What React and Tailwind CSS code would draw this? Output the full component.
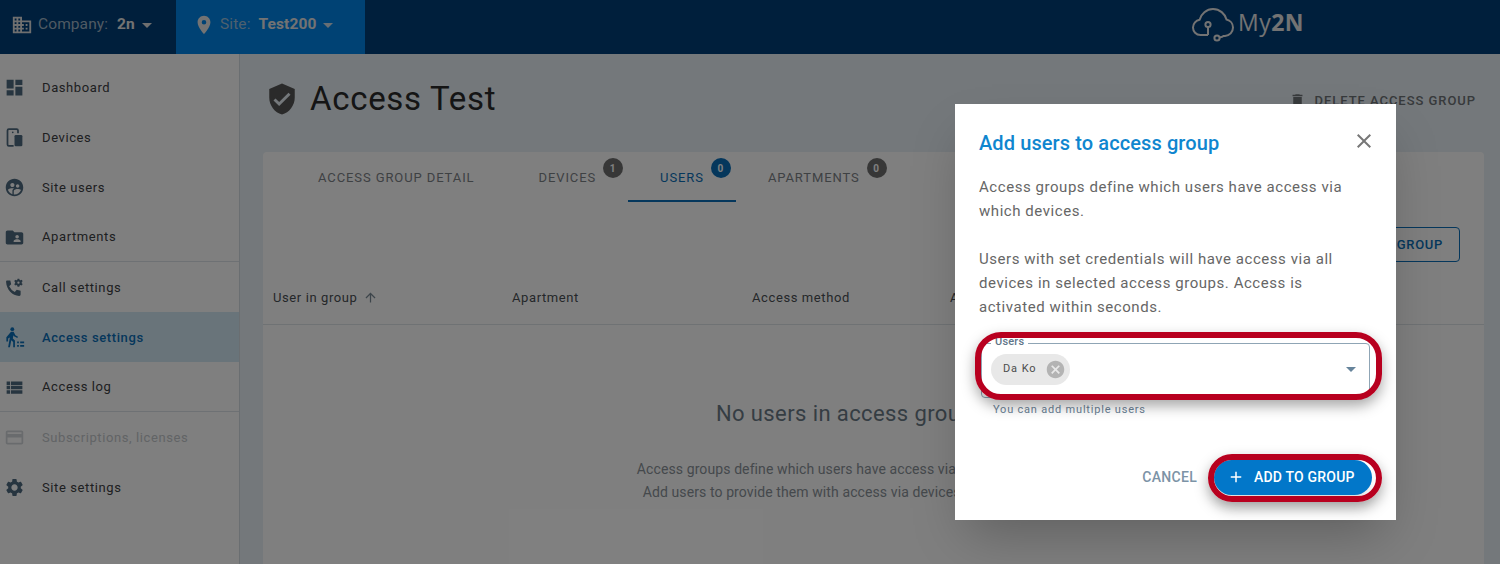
import React from 'react'
import {
  MdDashboard,
  MdFolderShared,
  MdViewList,
  MdCreditCard,
  MdSettings,
  MdVerifiedUser,
  MdDelete,
  MdBusiness,
  MdPlace,
  MdArrowDropDown,
  MdClose,
  MdCancel,
  MdAdd,
  MdArrowUpward,
  MdSupervisedUserCircle,
} from 'react-icons/md'

function DevicesIcon({ className }) {
  return (
    <svg viewBox="0 0 24 24" className={className} fill="none" stroke="currentColor" strokeWidth="2">
      <path d="M16 7V4a1.5 1.5 0 0 0-1.5-1.5h-9A1.5 1.5 0 0 0 4 4v16a1.5 1.5 0 0 0 1.5 1.5H11" />
      <rect x="12" y="9" width="9" height="13" rx="1.5" fill="currentColor" stroke="none" />
      <circle cx="10" cy="6" r="1" fill="currentColor" stroke="none" />
    </svg>
  )
}

function CallSettingsIcon({ className }) {
  return (
    <svg viewBox="0 0 24 24" className={className} fill="currentColor">
      <path d="M3 4h4.2l1 4.4-2.3 2.2a13 13 0 0 0 6.4 6.4l2.2-2.3 4.5 1V20a1.6 1.6 0 0 1-1.7 1.6C9.5 21.2 2.8 14.500 2.400 5.700A1.600 1.600 0 0 1 3 4z" />
      <path d="M17.500 2l.4 1.300 1.200.5 1.200-.6 1 1.700-1 .9v1.400l1 .9-1 1.700-1.200-.6-1.200.5-.4 1.300h-2l-.4-1.300-1.200-.5-1.200.6-1-1.700 1-.9V5.800l-1-.9 1-1.700 1.200.6 1.200-.5.4-1.300zm-1 3.200a1.300 1.300 0 1 0 0 2.600 1.300 1.300 0 0 0 0-2.600z" />
    </svg>
  )
}

function AccessIcon({ className }) {
  return (
    <svg viewBox="0 0 24 24" className={className} fill="currentColor">
      <circle cx="9.500" cy="2.500" r="2.200" />
      <path d="M8 5.500h3l2 4 3 1.500-.8 1.500-3.700-1.800-.7-1.200-.7 3.500 2.400 2.500V23h-2v-6l-2.200-2L6.800 23H4.700l2-11-2 1v3.500h-2v-4.700z" />
      <path d="M15 16.500h2v2h-2zM18.500 16.500H23v2h-4.500zM15 20.500h2v2h-2zM18.500 20.500H23v2h-4.500z" />
    </svg>
  )
}

function Logo() {
  return (
    <div className="flex items-center gap-[3px] text-[#e6e6e6]">
      <svg viewBox="0 0 44 36" className="w-[44px] h-[36px]" fill="none" stroke="currentColor" strokeWidth="2">
        <path d="M17 29H9.500C5 29 2 25.500 2 21.500c0-4 3-7.200 6.600-7.800C10 8 15.500 3 22 3c6.800 0 12 4.800 13.500 10.500 3.700.8 6.500 4 6.500 8 0 4.700-3.500 8-8 8.500h-2" />
        <circle cx="17" cy="18.500" r="2.600" />
        <path d="M17 21v8" />
        <circle cx="26" cy="32" r="2.600" />
        <path d="M28.500 31.500c2-.3 3.500-1 4-1.500" />
      </svg>
      <span className="font-['Open_Sans',sans-serif] text-[23px] leading-none tracking-[0.5px] mb-[3px]">
        My<span className="font-bold">2N</span>
      </span>
    </div>
  )
}

const navItems = [
  { label: 'Dashboard', icon: MdDashboard },
  { label: 'Devices', icon: DevicesIcon },
  { label: 'Site users', icon: MdSupervisedUserCircle },
  { label: 'Apartments', icon: MdFolderShared, divider: true },
  { label: 'Call settings', icon: CallSettingsIcon },
  { label: 'Access settings', icon: AccessIcon, active: true },
  { label: 'Access log', icon: MdViewList, divider: true },
  { label: 'Subscriptions, licenses', icon: MdCreditCard, disabled: true },
  { label: 'Site settings', icon: MdSettings },
]

function Sidebar() {
  return (
    <nav className="w-[240px] shrink-0 bg-white border-r border-[#d5dde3] pt-[8px]">
      {navItems.map((item) => {
        const Icon = item.icon
        return (
          <div
            key={item.label}
            className={
              'h-[50px] flex items-center pl-[4px] pt-[1px] text-[13px] tracking-[0.6px] ' +
              (item.active ? 'bg-[#d3e8f5] text-[#0a6fb8] font-medium ' : item.disabled ? 'text-[#c4c8cc] ' : 'text-[#3c4043] ') +
              (item.divider ? 'border-b border-[#dde3e8]' : '')
            }
          >
            <Icon
              className={
                'w-[21px] h-[21px] mr-[17px] ' +
                (item.active ? 'text-[#0a6fb8]' : item.disabled ? 'text-[#d3d7db]' : 'text-[#4f6b80]')
              }
            />
            {item.label}
          </div>
        )
      })}
    </nav>
  )
}

function Tab({ label, count, active }) {
  return (
    <div
      className={
        'relative h-[50px] px-8 pt-[4px] flex items-center text-[13px] tracking-[0.9px] border-b-2 ' +
        (active ? 'text-[#0a6fb8] border-[#0a6fb8]' : 'text-[#7d8287] border-transparent')
      }
    >
      {label}
      {count !== undefined && (
        <span
          className={
            'absolute top-[6px] right-[5px] w-[20px] h-[20px] rounded-full flex items-center justify-center text-[10px] font-bold text-white ' +
            (active ? 'bg-[#0a6fb8]' : 'bg-[#6f6f6f]')
          }
        >
          {count}
        </span>
      )}
    </div>
  )
}

function Page() {
  return (
    <main className="flex-1 bg-[#e9f1f6] pl-[23px] pr-[16px] min-w-0">
      <div className="h-[98px] flex items-center pb-[9px]">
        <MdVerifiedUser className="w-[34px] h-[34px] text-[#555] ml-[2px] mr-[11px]" />
        <h1 className="text-[33px] tracking-[0.7px] text-[#2a2a2a]">Access Test</h1>
        <div className="ml-auto mr-[8px] flex items-center text-[#6f7478] text-[13px] font-medium tracking-[0.95px] mt-[4px]">
          <MdDelete className="w-[17px] h-[17px] mr-[9px]" />
          DELETE ACCESS GROUP
        </div>
      </div>
      <section className="bg-white rounded-[4px] h-[420px]">
        <div className="flex pl-[23px]">
          <Tab label="ACCESS GROUP DETAIL" />
          <Tab label="DEVICES" count={1} />
          <Tab label="USERS" count={0} active />
          <Tab label="APARTMENTS" count={0} />
        </div>
        <div className="flex justify-end pr-[24px] pt-[25px] h-[75px]">
          <div className="h-[35px] px-4 rounded-[4px] border border-[#0a6fb8] text-[#0a6fb8] text-[13px] font-medium tracking-[0.7px] flex items-center">
            ADD USER TO GROUP
          </div>
        </div>
        <div className="h-[48px] flex items-center border-b border-[#dfe4e8] pl-[10px] pb-[6px] text-[13px] tracking-[0.6px] text-[#4a4f54]">
          <div className="w-[239px] flex items-center gap-[5px]">
            User in group <MdArrowUpward className="w-[15px] h-[15px] text-[#7b8a96]" />
          </div>
          <div className="w-[240px]">Apartment</div>
          <div className="w-[198px]">Access method</div>
          <div>A</div>
        </div>
        <div className="flex flex-col items-center pr-[58px]">
          <h2 className="mt-[72px] text-[22px] tracking-[0.4px] text-[#6b7a87]">No users in access group</h2>
          <p className="mt-[28px] text-[14px] leading-[23px] tracking-[0.1px] text-[#8a9299] text-center">
            Access groups define which users have access via which devices.
            <br />
            Add users to provide them with access via devices in this group.
          </p>
        </div>
      </section>
    </main>
  )
}

function Modal() {
  return (
    <div className="absolute left-[955px] top-[104px] w-[441px] h-[416px] bg-white shadow-2xl pl-[24px] pr-[25px]">
      <div className="flex items-start justify-between pt-[25px]">
        <h3 className="text-[20px] leading-[28px] text-[#0f86cf] font-medium tracking-[0.1px]">Add users to access group</h3>
        <MdClose className="w-[24px] h-[24px] text-[#777] mr-[-5px]" />
      </div>
      <p className="mt-[18px] text-[15px] leading-[24px] tracking-[0.55px] text-[#666]">
        Access groups define which users have access via
        <br />
        which devices.
      </p>
      <p className="mt-[24px] text-[15px] leading-[24px] tracking-[0.55px] text-[#666]">
        Users with set credentials will have access via all
        <br />
        devices in selected access groups. Access is
        <br />
        activated within seconds.
      </p>
      <div className="relative mt-[24px] ml-[2px] w-[389px] h-[55px] border border-[#8fa5b5] rounded-[4px] flex items-center pl-[9px] pr-[12px] pb-[3px]">
        <span className="absolute top-[-8px] left-[9px] bg-white px-[4px] text-[11px] leading-[12px] font-medium tracking-[0.2px] text-[#5f7689]">Users</span>
        <div className="h-[31px] w-[79px] rounded-full bg-[#e8e8e8] flex items-center pl-[12px] text-[11px] tracking-[0.9px] text-[#4d4d4d]">
          Da Ko
          <MdCancel className="w-[21px] h-[21px] text-[#b3b3b3] ml-[9px] shrink-0" />
        </div>
        <MdArrowDropDown className="ml-auto w-[24px] h-[24px] text-[#66849b] mr-[-6px]" />
      </div>
      <div className="mt-[4px] ml-[14px] text-[11px] tracking-[0.8px] text-[#6b8296]">You can add multiple users</div>
      <div className="mt-[41px] flex items-center justify-end gap-[17px] mr-[-1px]">
        <span className="text-[14px] font-medium tracking-[0.3px] text-[#7c93a6]">CANCEL</span>
        <button className="w-[158px] h-[35px] rounded-full bg-[#0277c9] text-white text-[14px] font-medium tracking-[0.2px] flex items-center pl-[13px] shadow-lg">
          <MdAdd className="w-[18px] h-[18px] mr-[9px]" />
          ADD TO GROUP
        </button>
      </div>
    </div>
  )
}

export default function App() {
  return (
    <div className="relative w-[1500px] h-[564px] overflow-hidden flex flex-col font-['Roboto',sans-serif]">
      <header className="h-[54px] shrink-0 bg-[#003e78] flex items-stretch text-white shadow-md">
        <div className="w-[176px] flex items-center pl-[11px] pb-[4px] text-[15.500px] tracking-[0.1px]">
          <MdBusiness className="w-[22px] h-[22px] mr-[5px] text-[#dfdfdf]" />
          <span className="text-[#9fb4c6]">Company:</span>
          <span className="ml-[9px] font-bold text-[#e6e6e6]">2n</span>
          <MdArrowDropDown className="w-[24px] h-[24px] text-[#dfdfdf]" />
        </div>
        <div className="w-[189px] bg-[#0084e8] flex items-center pl-[17px] pb-[4px] text-[15.500px] tracking-[0.1px]">
          <MdPlace className="w-[22px] h-[22px] mr-[5px] text-[#e6e6e6]" />
          <span className="text-[#9cc0dd]">Site:</span>
          <span className="ml-[8px] font-bold text-[#e6e6e6]">Test200</span>
          <MdArrowDropDown className="w-[24px] h-[24px] text-[#cfdde8]" />
        </div>
        <div className="ml-[826px] flex items-center mb-[6px]">
          <Logo />
        </div>
      </header>
      <div className="flex-1 flex min-h-0">
        <Sidebar />
        <Page />
      </div>
      <div className="absolute inset-0 bg-black/50" />
      <Modal />
      <div className="absolute left-[975px] top-[332px] w-[407px] h-[68px] rounded-[26px] border-[6px] border-[#b8001f] shadow-[0_6px_14px_rgba(0,0,0,0.35)]" />
      <div className="absolute left-[1208px] top-[454px] w-[174px] h-[48px] rounded-[24px] border-[6px] border-[#b8001f] shadow-[0_6px_14px_rgba(0,0,0,0.35)]" />
    </div>
  )
}
